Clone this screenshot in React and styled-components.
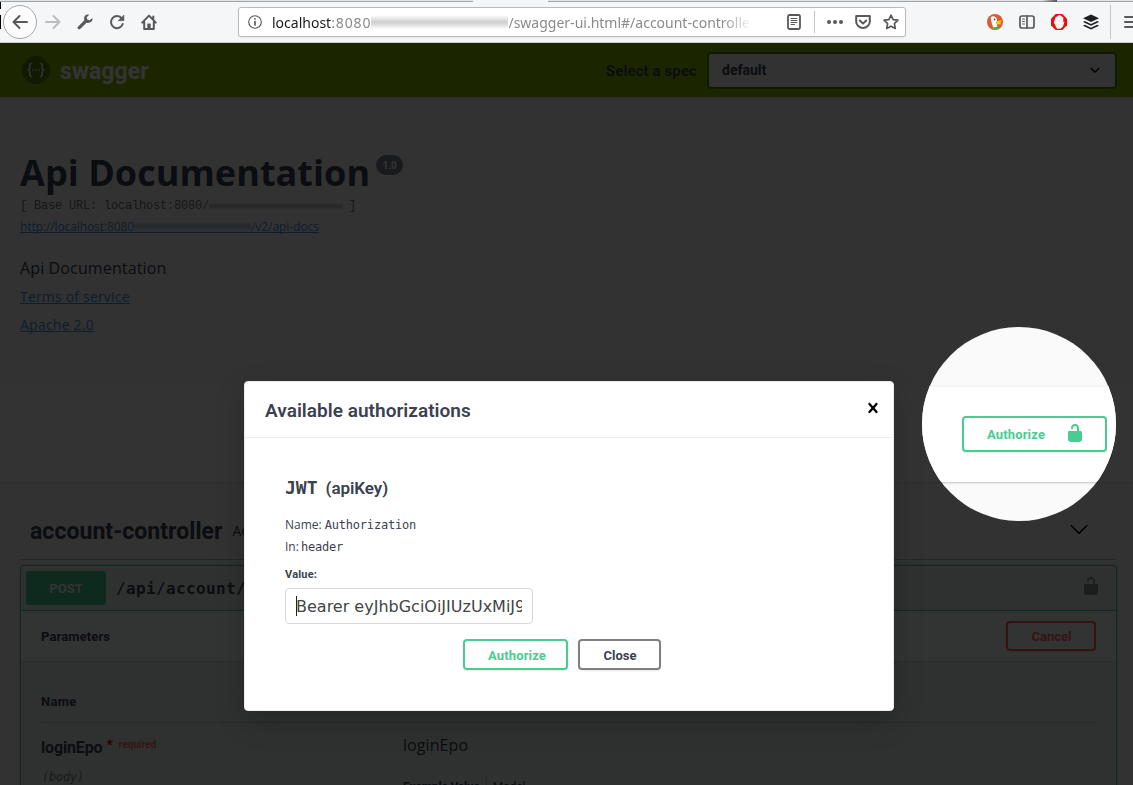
import React from "react";
import styled, { createGlobalStyle } from "styled-components";

const ui = `Roboto, "Liberation Sans", sans-serif`;
const body = `"Open Sans", "Noto Sans", sans-serif`;
const address = `"Noto Sans", sans-serif`;
const mono = `"DejaVu Sans Mono", monospace`;
const code = `"Liberation Mono", monospace`;

const GlobalStyle = createGlobalStyle`
  * { box-sizing: border-box; }
  body { margin: 0; background: #fafafa; font-family: ${body}; color: #3b4151; }
`;

const Window = styled.div`
  position: relative;
  width: 1133px;
  height: 785px;
  overflow: hidden;
  display: flex;
  flex-direction: column;
`;

const Text = styled.span`
  font-family: ${(p) => p.$font || body};
  font-size: ${(p) => p.$size || 14}px;
  font-weight: ${(p) => p.$weight || 400};
  letter-spacing: ${(p) => p.$track || 0}px;
  color: ${(p) => p.$color || "inherit"};
  line-height: ${(p) => p.$line || 20}px;
  margin-left: ${(p) => p.$ml || 0}px;
  padding-top: ${(p) => p.$drop || 0}px;
  white-space: pre;
`;

/* Browser chrome */
const TabEdge = styled.div`
  height: 2px;
  flex: none;
  display: flex;
`;
const TabSide = styled.div`
  width: ${(p) => p.$w};
  flex: ${(p) => (p.$grow ? 1 : "none")};
  border-bottom: 1px solid ${(p) => (p.$active ? "#f5f6f7" : "#a2a3a3")};
  background: ${(p) => (p.$active ? "#f5f6f7" : "#e3e4e6")};
`;
const Toolbar = styled.div`
  height: 41px;
  flex: none;
  display: flex;
  align-items: center;
  background: #f5f6f7;
  border-bottom: 1px solid #cbccca;
  padding-left: 3px;
  padding-bottom: 1px;
`;
const BackButton = styled.div`
  width: 34px;
  height: 34px;
  flex: none;
  border-radius: 50%;
  border: 1px solid #a9a9aa;
  background: #fcfcfc;
  display: grid;
  place-items: center;
`;
const NavIcons = styled.div`
  display: flex;
  flex: none;
  gap: 16px;
  margin-left: 8px;
  width: 193px;
`;
const UrlBar = styled.div`
  width: 668px;
  height: 30px;
  flex: none;
  border: 1px solid #b9b9ba;
  border-radius: 3px;
  background: #fff;
  display: flex;
  align-items: center;
  padding: 0 6px 0 9px;
  box-shadow: 0 1px 2px rgba(0, 0, 0, 0.06);
`;
const Url = styled.div`
  display: flex;
  align-items: center;
  width: 482px;
  margin-left: 10px;
  overflow: hidden;
  mask-image: linear-gradient(90deg, #000 450px, transparent 480px);
`;
const PageActions = styled.div`
  display: flex;
  flex: none;
  align-items: center;
  gap: 12px;
`;
const Smudge = styled.span`
  flex: none;
  width: ${(p) => p.$w}px;
  height: ${(p) => p.$h}px;
  background: linear-gradient(transparent, ${(p) => p.$color} 35%, ${(p) => p.$mid} 50%, ${(p) => p.$color} 70%, transparent);
`;
const Divider = styled.div`
  width: 1px;
  flex: none;
  height: ${(p) => p.$h}px;
  background: #c4c5c6;
  margin: ${(p) => p.$m};
`;
const Extensions = styled.div`
  display: flex;
  flex: none;
  align-items: center;
  gap: 16px;
  margin-left: 81px;
`;

/* API page */
const TopBar = styled.header`
  height: 54px;
  flex: none;
  background: #89bf04;
  display: flex;
  align-items: center;
  padding: 0 16px 0 22px;
`;
const Brand = styled.div`
  display: flex;
  align-items: center;
  gap: 10px;
  flex: 1;
`;
const SpecSelect = styled.div`
  width: 410px;
  height: 37px;
  margin-left: 10px;
  border: 2px solid #547f00;
  border-radius: 4px;
  background: #f7f7f7;
  display: flex;
  align-items: center;
  justify-content: space-between;
  padding: 0 10px 0 13px;
`;
const Info = styled.section`
  height: 289px;
  flex: none;
  padding: 56px 20px 0;
  display: flex;
  flex-direction: column;
`;
const TitleRow = styled.div`
  display: flex;
  height: 40px;
  gap: 6px;
`;
const Version = styled.span`
  margin-top: 2px;
  width: 27px;
  height: 20px;
  border-radius: 10px;
  background: #7d8492;
  display: grid;
  place-items: center;
`;
const Line = styled.div`
  height: ${(p) => p.$h || 20}px;
  margin-top: ${(p) => p.$mt || 0}px;
  display: flex;
  align-items: center;
`;
const Link = styled.a`
  display: flex;
  align-items: center;
  color: #4990e2;
  height: 14px;
  border-bottom: 1px solid #4990e2;
`;
const Raised = styled.div`
  display: flex;
  padding-bottom: ${(p) => p.$by}px;
`;
const SchemeBand = styled.div`
  height: 96px;
  flex: none;
  background: #fff;
  box-shadow: 0 1px 2px rgba(0, 0, 0, 0.15);
`;
const TagHeader = styled.div`
  margin: 20px 16px 0 20px;
  height: 58px;
  flex: none;
  border-bottom: 1px solid rgba(59, 65, 81, 0.3);
  display: flex;
  align-items: center;
  padding: 0 28px 0 10px;
`;
const Grow = styled.div`
  flex: 1;
`;
const Operation = styled.div`
  margin: 5px 16px 0 20px;
  height: 240px;
  flex: none;
  border: 1px solid #49cc90;
  border-radius: 4px;
  background: #e9f6f0;
  box-shadow: 0 0 3px rgba(0, 0, 0, 0.19);
`;
const Summary = styled.div`
  height: 45px;
  border-bottom: 1px solid #49cc90;
  display: flex;
  align-items: center;
  padding: 0 15px 0 5px;
`;
const Method = styled.div`
  width: 80px;
  height: 34px;
  margin-right: 10px;
  border-radius: 3px;
  background: #49cc90;
  display: grid;
  place-items: center;
`;
const SectionHeader = styled.div`
  height: 50px;
  background: #fbfdfc;
  box-shadow: 0 1px 2px rgba(0, 0, 0, 0.1);
  display: flex;
  align-items: center;
  justify-content: space-between;
  padding: 0 20px;
`;
const Button = styled.div`
  width: ${(p) => p.$w}px;
  height: ${(p) => p.$h}px;
  border: 2px solid ${(p) => p.$color};
  border-radius: 4px;
  box-shadow: 0 1px 2px rgba(0, 0, 0, 0.1);
  display: flex;
  align-items: center;
  justify-content: ${(p) => (p.$spread ? "space-between" : "center")};
  padding: ${(p) => (p.$spread ? "0 20px 0 23px" : "0 0 0 1px")};
`;
const ParamTable = styled.div`
  padding: 29px 20px 0;
`;
const ParamHead = styled.div`
  height: 33px;
  border-bottom: 1px solid rgba(59, 65, 81, 0.2);
  display: flex;
`;
const ParamRow = styled.div`
  display: grid;
  grid-template-columns: 362px 1fr;
  padding-top: 12px;
`;
const Tabs = styled.div`
  display: flex;
  margin-top: 22px;
  align-items: flex-start;
`;

/* Overlays */
const Backdrop = styled.div`
  position: absolute;
  inset: 43px 0 0 0;
  background: rgba(0, 0, 0, 0.8);
`;
const Spotlight = styled.div`
  position: absolute;
  left: 922px;
  top: 327px;
  width: 194px;
  height: 194px;
  border-radius: 50%;
  overflow: hidden;
  background: #fafafa;
  padding-top: 59px;
`;
const SpotBand = styled.div`
  height: 96px;
  background: #fff;
  border-top: 1px solid #f4f4f4;
  box-shadow: 0 1px 2px rgba(0, 0, 0, 0.22);
  padding: 29px 0 0 40px;
`;
const Modal = styled.div`
  position: absolute;
  left: 244px;
  top: 381px;
  width: 650px;
  height: 330px;
  border: 1px solid #ebebeb;
  border-radius: 4px;
  background: #fff;
  box-shadow: 0 10px 30px rgba(0, 0, 0, 0.2);
`;
const ModalHeader = styled.div`
  height: 56px;
  border-bottom: 1px solid #ebebeb;
  display: flex;
  align-items: center;
  justify-content: space-between;
  padding: 0 10px 0 20px;
`;
const ModalBody = styled.div`
  padding: 38px 40px 0;
  display: flex;
  flex-direction: column;
`;
const Input = styled.div`
  width: 248px;
  height: 36px;
  margin-top: 3px;
  border: 1px solid #d9d9d9;
  border-radius: 4px;
  padding: 0 10px;
  display: flex;
  align-items: center;
`;
const InputClip = styled.div`
  overflow: hidden;
  height: 20px;
  border-left: 1px solid #222;
  display: flex;
  align-items: center;
`;
const Actions = styled.div`
  display: flex;
  gap: 10px;
  margin: 15px 0 0 178px;
`;
const EdgeMark = styled.div`
  position: absolute;
  left: 0;
  top: ${(p) => p.$y}px;
  width: 1px;
  height: ${(p) => p.$h}px;
  background: #000;
`;
const TabShade = styled.div`
  position: absolute;
  left: 1042px;
  top: 0;
  width: 15px;
  height: 2px;
  background: linear-gradient(90deg, transparent, #555);
`;
const Glyph = styled.svg`
  flex: none;
  display: block;
`;

const Icon = ({ children, size = 16, box = 16, color = "#58595b", sw = 2, fill = "none" }) => (
  <Glyph width={size} height={size} viewBox={`0 0 ${box} ${box}`} fill={fill} stroke={color} strokeWidth={sw} strokeLinecap="round" strokeLinejoin="round">
    {children}
  </Glyph>
);
const Unlock = ({ color }) => (
  <Icon size={20} box={20} fill={color} color="none">
    <path d="M15.8 8H14V5.6C14 2.703 12.665 1 10 1 7.334 1 6 2.703 6 5.6V6h2v-.801C8 3.754 8.797 3 10 3c1.203 0 2 .754 2 2.199V8H4c-.553 0-1 .646-1 1.199V17c0 .549.428 1.139.951 1.307l1.197.387C5.672 18.861 6.55 19 7.1 19h5.8c.549 0 1.428-.139 1.951-.307l1.196-.387c.524-.167.953-.757.953-1.306V9.199C17 8.646 16.352 8 15.8 8z" />
  </Icon>
);

function Chrome() {
  return (
    <>
      <TabEdge>
        <TabSide $w="473px" />
        <TabSide $w="75px" $active />
        <TabSide $grow />
      </TabEdge>
      <Toolbar>
        <BackButton>
          <Icon><path d="M15 8H1.6M7.5 2 1.5 8l6 6" /></Icon>
        </BackButton>
        <NavIcons>
          <Icon color="#bcbdbe"><path d="M1 8h13.4M8.5 2l6 6-6 6" /></Icon>
          <Icon color="none" fill="#58595b"><path d="M15.5 4 12.6 6.3 10.3 5.6 9.7 3.3 12.2.8C9.3 0 6.700 2 7.100 5L7.300 6.300.8 12.900C-.2 14.200 1.700 16.200 3.200 15L9.500 8.700C12.700 9.700 16.200 7.300 15.500 4Z" /></Icon>
          <Icon><path d="M13.7 10A6 6 0 1 1 12.800 4.500" /><path d="M14.800 1.500V6.600H9.700Z" fill="#58595b" strokeWidth="0.8" /></Icon>
          <Icon><path d="M1.200 8.600 8 1.600l6.800 7M3.200 8v7h9.600V8M12.300 2.500v3" /><path d="M7.300 10.500h1.400V15H7.300z" /></Icon>
        </NavIcons>
        <UrlBar>
          <Icon size={14} sw={1.3}><circle cx="8" cy="8" r="7.200" /><path d="M8 7.500v4M8 4.400v.3" strokeWidth="1.900" /></Icon>
          <Url>
            <Text $font={address} $color="#1a1a1c" $drop={2}>localhost</Text>
            <Text $font={address} $color="#8a8a8c" $track={0.9} $drop={2}>:8080</Text>
            <Smudge $w={137} $h={14} $color="#dedede" $mid="#cfcfcf" />
            <Text $font={address} $color="#8a8a8c" $drop={2}>/swagger-ui.html#/account-controller</Text>
          </Url>
          <Grow />
          <Icon sw={1.8}><rect x="2" y="1" width="12" height="14" rx="1.500" /><path d="M5 4.500h6M5 6.500h6M5 8.500h6M5 10.500h3.500" strokeWidth="1" /></Icon>
          <Divider $h={22} $m="0 12px 0 12px" />
          <PageActions>
            <Icon color="none" fill="#58595b"><circle cx="2" cy="8" r="2" /><circle cx="8" cy="8" r="2" /><circle cx="14" cy="8" r="2" /></Icon>
            <Icon><path d="M1.200 2h13.600v5.500a6.800 6.500 0 0 1-13.600 0z" /><path d="M4.800 6.500 8 9.600l3.200-3.100" /></Icon>
            <Icon sw={1.7}><path d="M8 1.200l2.100 4.400 4.800.6-3.500 3.400.9 4.900L8 12.200l-4.300 2.300.9-4.900L1.100 6.200l4.800-.6z" /></Icon>
          </PageActions>
        </UrlBar>
        <Extensions>
          <Icon color="none"><circle cx="8" cy="8" r="8" fill="#de5833" /><path d="M3.800 3.500C5 1.500 9 2 10 5.500l.2 8.200c-1 1.800-3 1.800-4 .8C6 11 3.300 7 3.800 3.500z" fill="#fff" /><path d="M8.800 7.200l6-1-1.300 2.600.5 1.700-5-.3z" fill="#fdc608" /><path d="M6.200 13.300l5.500-.5v2.400l-5.500.5z" fill="#42b649" /><circle cx="7.600" cy="5.400" r=".9" fill="#2c4a6e" /></Icon>
          <Icon sw={1.7}><rect x="1" y="2" width="14" height="12" rx="2" /><path d="M8 2v12" /><path d="M3.500 5h2M3.500 7.500h2M3.500 10h2" strokeWidth="1" /></Icon>
          <Icon color="none"><path d="M4.700 0h6.600L16 4.700v6.600L11.300 16H4.700L0 11.300V4.700z" fill="#ee0b0b" /><path d="M2.800 8.500 4.600 3l1.500-.5L7.500 1.200h2l1.200 1.300 1.600 1v5l1.200-1L12 12.500l-2.500 2.300H6z" fill="#f5f5f5" /></Icon>
          <Icon color="none" fill="#1d1f21"><path d="M8 .5l8 3.800-8 3.800L0 4.300z" /><path d="M1.800 7 8 9.900 14.200 7l1.800.9-8 3.800L0 7.900z" /><path d="M1.800 10.800 8 13.700l6.200-2.900 1.800.9-8 3.800-8-3.800z" /></Icon>
        </Extensions>
        <Divider $h={34} $m="0 13px 0 11px" />
        <Icon><path d="M1 3h14M1 8h14M1 13h14" /></Icon>
      </Toolbar>
    </>
  );
}

function ApiPage() {
  return (
    <>
      <TopBar>
        <Brand>
          <Icon size={28} box={28} color="#f0f0f0" sw={1.7}>
            <circle cx="14" cy="14" r="14" fill="#547f00" stroke="none" />
            <path d="M9.500 7.500C7 7.500 8 11 7.700 12.500 7.500 13.600 6.500 14 6 14c.5 0 1.500.4 1.700 1.500C8 17 7 20.500 9.500 20.500M18.500 7.500c2.500 0 1.500 3.500 1.800 5 .2 1.100 1.200 1.500 1.700 1.500-.5 0-1.500.4-1.700 1.500-.3 1.500.7 5-1.800 5M11 14h.1M14 14h.1M17 14h.1" />
          </Icon>
          <Text $font={ui} $size={23} $weight={700} $color="#fff" $track={0.1} $line={24} $drop={3}>swagger</Text>
        </Brand>
        <Text $font={ui} $size={15} $weight={700} $track={0.1} $drop={2}>Select a spec</Text>
        <SpecSelect>
          <Text $font={ui} $weight={700}>default</Text>
          <Icon size={20} box={20} color="none" fill="#000"><path d="M13.418 7.859c.271-.268.709-.268.978 0 .27.268.272.701 0 .969l-3.908 3.83c-.27.268-.707.268-.979 0l-3.908-3.830c-.27-.267-.27-.701 0-.969.271-.268.709-.268.978 0L10 11l3.418-3.141z" /></Icon>
        </SpecSelect>
      </TopBar>
      <Info>
        <TitleRow>
          <Text $size={36} $weight={700} $line={40} $track={0.05}>Api Documentation</Text>
          <Version><Text $size={10} $weight={700} $color="#fff">1.0</Text></Version>
        </TitleRow>
        <Line $h={16} $mt={5}>
          <Text $font={code} $size={12} $color="#6d717c" $track={-0.2}>[ Base URL: localhost:8080/</Text>
          <Smudge $w={134} $h={8} $color="#d4d4d4" $mid="#bcbcbc" />
          <Text $font={code} $size={12} $color="#6d717c" $track={-0.3} $ml={-1}> ]</Text>
        </Line>
        <Line $h={16} $mt={4}>
          <Link>
            <Text $size={12} $track={-0.1} $drop={2}>http://localhost:8080</Text>
            <Smudge $w={117} $h={10} $color="#ccd6e2" $mid="#b4c5d8" />
            <Text $size={12} $track={-0.05} $drop={2}>/v2/api-docs</Text>
          </Link>
        </Line>
        <Line $mt={24}><Text $size={16} $track={0.13}>Api Documentation</Text></Line>
        <Line $mt={9}><Link><Text $track={0.19}>Terms of service</Text></Link></Line>
        <Line $mt={8}><Link><Text $track={0.23}>Apache 2.0</Text></Link></Line>
      </Info>
      <SchemeBand />
      <TagHeader>
        <Text $font={ui} $size={23} $weight={700} $track={0.05} $line={24} $drop={2}>account-controller</Text>
        <Text $ml={10}>Account Controller</Text>
        <Grow />
        <Raised $by={3}>
          <Icon size={20} box={20} color="none" fill="#000"><path d="M17.418 6.109c.272-.268.709-.268.979 0s.271.701 0 .969l-7.908 7.830c-.27.268-.707.268-.979 0l-7.908-7.830c-.27-.268-.27-.701 0-.969.271-.268.709-.268.979 0L10 13.250l7.418-7.141z" /></Icon>
        </Raised>
      </TagHeader>
      <Operation>
        <Summary>
          <Method><Text $font={ui} $size={13} $weight={700} $color="#fff" $drop={2}>POST</Text></Method>
          <Text $font={mono} $size={16} $weight={700} $track={0.37} $drop={2}>/api/account/login</Text>
          <Grow />
          <Raised $by={4}><Unlock color="#8d9791" /></Raised>
        </Summary>
        <SectionHeader>
          <Text $font={ui} $size={13} $weight={700} $track={0.12} $drop={2}>Parameters</Text>
          <Button $w={90} $h={30} $color="#ff6060"><Text $font={ui} $size={13} $weight={700} $color="#ff6060" $drop={2}>Cancel</Text></Button>
        </SectionHeader>
        <ParamTable>
          <ParamHead><Text $font={ui} $size={13} $weight={700} $track={0.3} $drop={2}>Name</Text></ParamHead>
          <ParamRow>
            <div>
              <Line $h={24}>
                <Text $font={ui} $size={16} $weight={700} $track={-0.15} $drop={1}>loginEpo</Text>
                <Raised $by={5}>
                  <Text $font={ui} $size={14} $weight={700} $color="#f00" $ml={4}>*</Text>
                  <Text $font={ui} $size={10} $weight={700} $color="#ff6666" $ml={6}>required</Text>
                </Raised>
              </Line>
              <Line $mt={8}><Text $font={mono} $size={12} $color="#808080" $track={-0.2} $ml={1}><i>(body)</i></Text></Line>
            </div>
            <div>
              <Line><Text $size={16} $track={0.08}>loginEpo</Text></Line>
              <Tabs>
                <Text $font={ui} $size={12} $weight={700} $track={-0.2}>Example Value</Text>
                <Divider $h={20} $m="0 6px" />
                <Text $font={ui} $size={12} $track={-0.2}>Model</Text>
              </Tabs>
            </div>
          </ParamRow>
        </ParamTable>
      </Operation>
    </>
  );
}

function AuthModal() {
  return (
    <Modal>
      <ModalHeader>
        <Text $font={ui} $size={19} $weight={600} $line={24} $drop={2} $track={0.03}>Available authorizations</Text>
        <Raised $by={4}>
          <Icon size={20} box={20} color="none" fill="#000"><path d="M14.348 14.849c-.469.469-1.229.469-1.697 0L10 11.819l-2.651 3.029c-.469.469-1.229.469-1.697 0-.469-.469-.469-1.229 0-1.697l2.758-3.150-2.759-3.152c-.469-.469-.469-1.228 0-1.697.469-.469 1.228-.469 1.697 0L10 8.183l2.651-3.031c.469-.469 1.228-.469 1.697 0 .469.469.469 1.229 0 1.697l-2.758 3.152 2.758 3.150c.469.469.469 1.229 0 1.698z" /></Icon>
        </Raised>
      </ModalHeader>
      <ModalBody>
        <Line $h={24}>
          <Text $font={mono} $size={18} $weight={700}>JWT</Text>
          <Text $font={ui} $size={17} $weight={600} $ml={8} $track={-0.05}>(apiKey)</Text>
        </Line>
        <Line $mt={15}><Text $size={12}>Name:</Text><Text $font={mono} $size={12} $track={-0.2} $ml={3}>Authorization</Text></Line>
        <Line $mt={2}><Text $size={12}>In:</Text><Text $font={mono} $size={12} $track={-0.2} $ml={2}>header</Text></Line>
        <Line $mt={8}><Text $font={ui} $size={11} $weight={700} $track={0.2}>Value:</Text></Line>
        <Input><InputClip><Text $font={`"DejaVu Sans", sans-serif`} $size={16} $color="#444" $ml={-1} $drop={1}>Bearer eyJhbGciOiJIUzUxMiJ9</Text></InputClip></Input>
        <Actions>
          <Button $w={105} $h={31} $color="#49cc90"><Text $font={ui} $size={13} $weight={700} $color="#49cc90" $track={0.15} $drop={2} $ml={2}>Authorize</Text></Button>
          <Button $w={83} $h={31} $color="#808080"><Text $font={ui} $size={13} $weight={700} $drop={2}>Close</Text></Button>
        </Actions>
      </ModalBody>
    </Modal>
  );
}

export default function App() {
  return (
    <Window>
      <GlobalStyle />
      <Chrome />
      <ApiPage />
      <EdgeMark $y={2} $h={7} />
      <EdgeMark $y={15} $h={14} />
      <TabShade />
      <Backdrop />
      <Spotlight>
        <SpotBand>
          <Button $w={145} $h={36} $color="#49cc90" $spread>
            <Text $font={ui} $size={13} $weight={700} $color="#49cc90" $track={0.15} $drop={2}>Authorize</Text>
            <Raised $by={2}><Unlock color="#49cc90" /></Raised>
          </Button>
        </SpotBand>
      </Spotlight>
      <AuthModal />
    </Window>
  );
}
